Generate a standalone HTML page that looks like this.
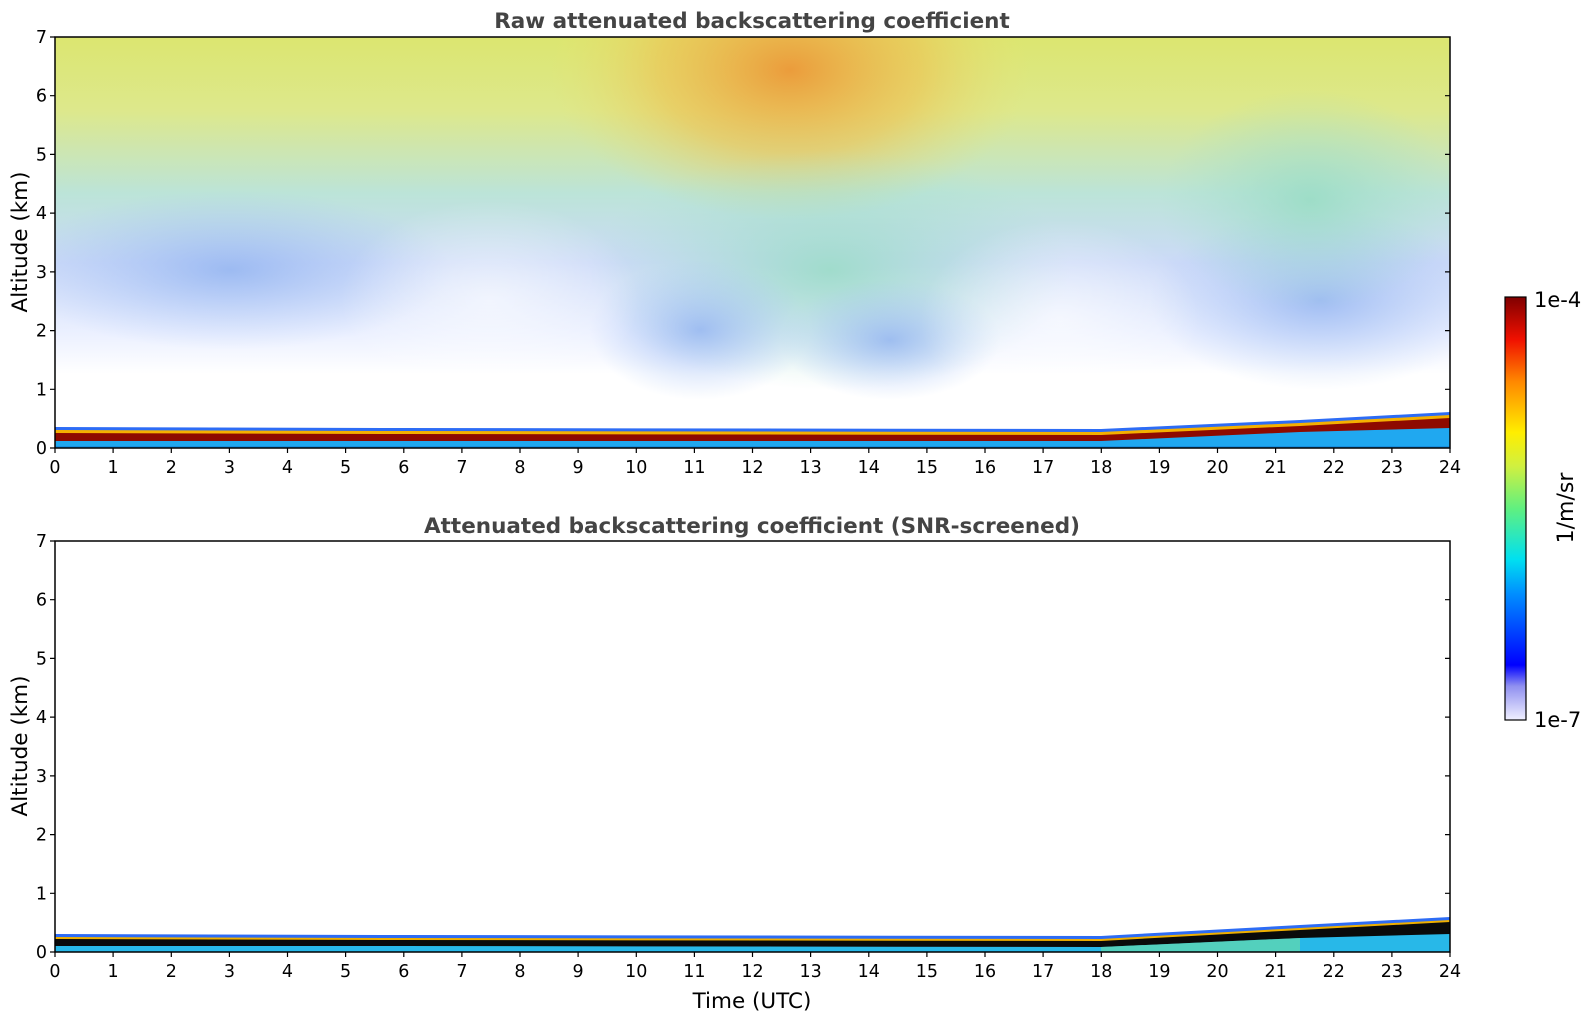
<!DOCTYPE html>
<html><head><meta charset="utf-8"><style>
html,body{margin:0;padding:0;background:#fff;}
svg{display:block;font-family:"DejaVu Sans","Liberation Sans",sans-serif;}
</style></head><body>
<svg width="1595" height="1020" viewBox="0 0 1595 1020" xmlns="http://www.w3.org/2000/svg">
<defs>
<clipPath id="c1"><rect x="55" y="37" width="1395" height="411"/></clipPath>
<linearGradient id="vtop" x1="0" y1="0" x2="0" y2="1">
<stop offset="0" stop-color="#dce670"/>
<stop offset="0.18" stop-color="#dde88c"/>
<stop offset="0.38" stop-color="#bce4d8"/>
<stop offset="0.55" stop-color="#ccdaf8"/>
<stop offset="0.72" stop-color="#ebf0ff"/>
<stop offset="0.82" stop-color="#ffffff"/>
<stop offset="1" stop-color="#ffffff"/>
</linearGradient>
<radialGradient id="hot" cx="0.5" cy="0.5" r="0.5">
<stop offset="0" stop-color="#ec9838" stop-opacity="0.95"/>
<stop offset="0.55" stop-color="#eec050" stop-opacity="0.6"/>
<stop offset="1" stop-color="#e8e070" stop-opacity="0"/>
</radialGradient>
<radialGradient id="mid" cx="0.5" cy="0.5" r="0.5">
<stop offset="0" stop-color="#98dcc4" stop-opacity="0.85"/>
<stop offset="1" stop-color="#a8e0d0" stop-opacity="0"/>
</radialGradient>
<radialGradient id="blue" cx="0.5" cy="0.5" r="0.5">
<stop offset="0" stop-color="#90b2f0" stop-opacity="0.8"/>
<stop offset="1" stop-color="#a8c4f8" stop-opacity="0"/>
</radialGradient>
<radialGradient id="wh" cx="0.5" cy="0.5" r="0.5">
<stop offset="0" stop-color="#ffffff" stop-opacity="0.6"/>
<stop offset="1" stop-color="#ffffff" stop-opacity="0"/>
</radialGradient>
<linearGradient id="cb" x1="0" y1="1" x2="0" y2="0">
<stop offset="0" stop-color="#f0f0ff"/>
<stop offset="0.08" stop-color="#9090f0"/>
<stop offset="0.13" stop-color="#0000ff"/>
<stop offset="0.3" stop-color="#0090ff"/>
<stop offset="0.38" stop-color="#00e0f0"/>
<stop offset="0.5" stop-color="#60f080"/>
<stop offset="0.6" stop-color="#d0f040"/>
<stop offset="0.68" stop-color="#ffee00"/>
<stop offset="0.8" stop-color="#ff8800"/>
<stop offset="0.9" stop-color="#f01000"/>
<stop offset="1" stop-color="#800000"/>
</linearGradient>
</defs>

<g clip-path="url(#c1)">
<rect x="55" y="37" width="1395" height="411" fill="url(#vtop)"/>
<ellipse cx="790" cy="70" rx="240" ry="150" fill="url(#hot)"/>
<ellipse cx="830" cy="270" rx="240" ry="120" fill="url(#mid)"/>
<ellipse cx="700" cy="330" rx="110" ry="70" fill="url(#blue)"/>
<ellipse cx="890" cy="340" rx="110" ry="60" fill="url(#blue)"/>
<ellipse cx="1320" cy="300" rx="170" ry="90" fill="url(#blue)"/>
<ellipse cx="1310" cy="200" rx="150" ry="110" fill="url(#mid)"/>
<ellipse cx="230" cy="270" rx="220" ry="80" fill="url(#blue)"/>
<ellipse cx="490" cy="300" rx="150" ry="100" fill="url(#wh)"/>
<ellipse cx="1060" cy="320" rx="140" ry="100" fill="url(#wh)"/>
</g>
<polygon points="55,427 400,428 1101,429 1300,420 1450,412 1450,448 55,448" fill="#2d6cf5"/>
<polygon points="55,430 400,431 1101,432 1300,423 1450,415 1450,448 55,448" fill="#f5b000"/>
<polygon points="55,433 400,434 1101,435 1300,426 1450,418 1450,448 55,448" fill="#8e0a00"/>
<polygon points="55,441 400,441 1101,441 1300,432 1450,428 1450,448 55,448" fill="#20a8f0"/>
<polygon points="55,446 1450,446 1450,448 55,448" fill="#1890e0"/>

<polygon points="55,934 400,935 1101,936 1300,925 1450,917 1450,952 55,952" fill="#2d6cf5"/>
<polygon points="55,937 400,938 1101,939 1300,928 1450,920 1450,952 55,952" fill="#f0b000"/>
<polygon points="55,939 400,940 1101,941 1300,930 1450,922 1450,952 55,952" fill="#0a0a0a"/>
<polygon points="55,946 400,946 1101,947 1300,938 1450,934 1450,952 55,952" fill="#28b8e8"/>
<polygon points="1101,947 1300,938 1300,952 1101,952" fill="#70e0a0" opacity="0.6"/>

<rect x="55" y="37" width="1395" height="411" fill="none" stroke="#000" stroke-width="1.5"/>
<rect x="55" y="541" width="1395" height="411" fill="none" stroke="#000" stroke-width="1.5"/>

<g stroke="#000" stroke-width="1.2">
<path d="M55,448v5M113.1,448v5M171.3,448v5M229.4,448v5M287.5,448v5M345.6,448v5M403.8,448v5M461.9,448v5M520,448v5M578.1,448v5M636.3,448v5M694.4,448v5M752.5,448v5M810.6,448v5M868.8,448v5M926.9,448v5M985,448v5M1043.1,448v5M1101.3,448v5M1159.4,448v5M1217.5,448v5M1275.6,448v5M1333.8,448v5M1391.9,448v5M1450,448v5"/>
<path d="M55,952v5M113.1,952v5M171.3,952v5M229.4,952v5M287.5,952v5M345.6,952v5M403.8,952v5M461.9,952v5M520,952v5M578.1,952v5M636.3,952v5M694.4,952v5M752.5,952v5M810.6,952v5M868.8,952v5M926.9,952v5M985,952v5M1043.1,952v5M1101.3,952v5M1159.4,952v5M1217.5,952v5M1275.6,952v5M1333.8,952v5M1391.9,952v5M1450,952v5"/>
<path d="M55,448h-5M55,389.3h-5M55,330.6h-5M55,271.9h-5M55,213.1h-5M55,154.4h-5M55,95.7h-5M55,37h-5"/>
<path d="M1450,389.3h-5M1450,330.6h-5M1450,271.9h-5M1450,213.1h-5M1450,154.4h-5M1450,95.7h-5"/>
<path d="M55,952h-5M55,893.3h-5M55,834.6h-5M55,775.9h-5M55,717.1h-5M55,658.4h-5M55,599.7h-5M55,541h-5"/>
<path d="M1450,893.3h-5M1450,834.6h-5M1450,775.9h-5M1450,717.1h-5M1450,658.4h-5M1450,599.7h-5"/>
</g>

<g font-size="17.5" fill="#000" text-anchor="middle">
<g transform="translate(0,473)">
<text x="55">0</text><text x="113.1">1</text><text x="171.3">2</text><text x="229.4">3</text><text x="287.5">4</text><text x="345.6">5</text><text x="403.8">6</text><text x="461.9">7</text><text x="520">8</text><text x="578.1">9</text><text x="636.3">10</text><text x="694.4">11</text><text x="752.5">12</text><text x="810.6">13</text><text x="868.8">14</text><text x="926.9">15</text><text x="985">16</text><text x="1043.1">17</text><text x="1101.3">18</text><text x="1159.4">19</text><text x="1217.5">20</text><text x="1275.6">21</text><text x="1333.8">22</text><text x="1391.9">23</text><text x="1450">24</text>
</g>
<g transform="translate(0,977)">
<text x="55">0</text><text x="113.1">1</text><text x="171.3">2</text><text x="229.4">3</text><text x="287.5">4</text><text x="345.6">5</text><text x="403.8">6</text><text x="461.9">7</text><text x="520">8</text><text x="578.1">9</text><text x="636.3">10</text><text x="694.4">11</text><text x="752.5">12</text><text x="810.6">13</text><text x="868.8">14</text><text x="926.9">15</text><text x="985">16</text><text x="1043.1">17</text><text x="1101.3">18</text><text x="1159.4">19</text><text x="1217.5">20</text><text x="1275.6">21</text><text x="1333.8">22</text><text x="1391.9">23</text><text x="1450">24</text>
</g>
</g>
<g font-size="17.5" fill="#000" text-anchor="end">
<text x="47" y="454">0</text><text x="47" y="395.3">1</text><text x="47" y="336.6">2</text><text x="47" y="277.9">3</text><text x="47" y="219.1">4</text><text x="47" y="160.4">5</text><text x="47" y="101.7">6</text><text x="47" y="43">7</text>
<text x="47" y="958">0</text><text x="47" y="899.3">1</text><text x="47" y="840.6">2</text><text x="47" y="781.9">3</text><text x="47" y="723.1">4</text><text x="47" y="664.4">5</text><text x="47" y="605.7">6</text><text x="47" y="547">7</text>
</g>

<text x="752" y="28" font-size="21.5" font-weight="bold" fill="#444" text-anchor="middle">Raw attenuated backscattering coefficient</text>
<text x="752" y="533" font-size="21.5" font-weight="bold" fill="#444" text-anchor="middle">Attenuated backscattering coefficient (SNR-screened)</text>
<text transform="translate(27,242) rotate(-90)" font-size="21.5" text-anchor="middle">Altitude (km)</text>
<text transform="translate(27,746) rotate(-90)" font-size="21.5" text-anchor="middle">Altitude (km)</text>
<text x="752" y="1008" font-size="21.5" text-anchor="middle">Time (UTC)</text>

<rect x="1505" y="297" width="21" height="423" fill="url(#cb)" stroke="#000" stroke-width="1.2"/>
<text x="1534" y="307" font-size="21">1e-4</text>
<text x="1534" y="727" font-size="21">1e-7</text>
<text transform="translate(1573,508) rotate(-90)" font-size="22" text-anchor="middle">1/m/sr</text>
</svg>
</body></html>
